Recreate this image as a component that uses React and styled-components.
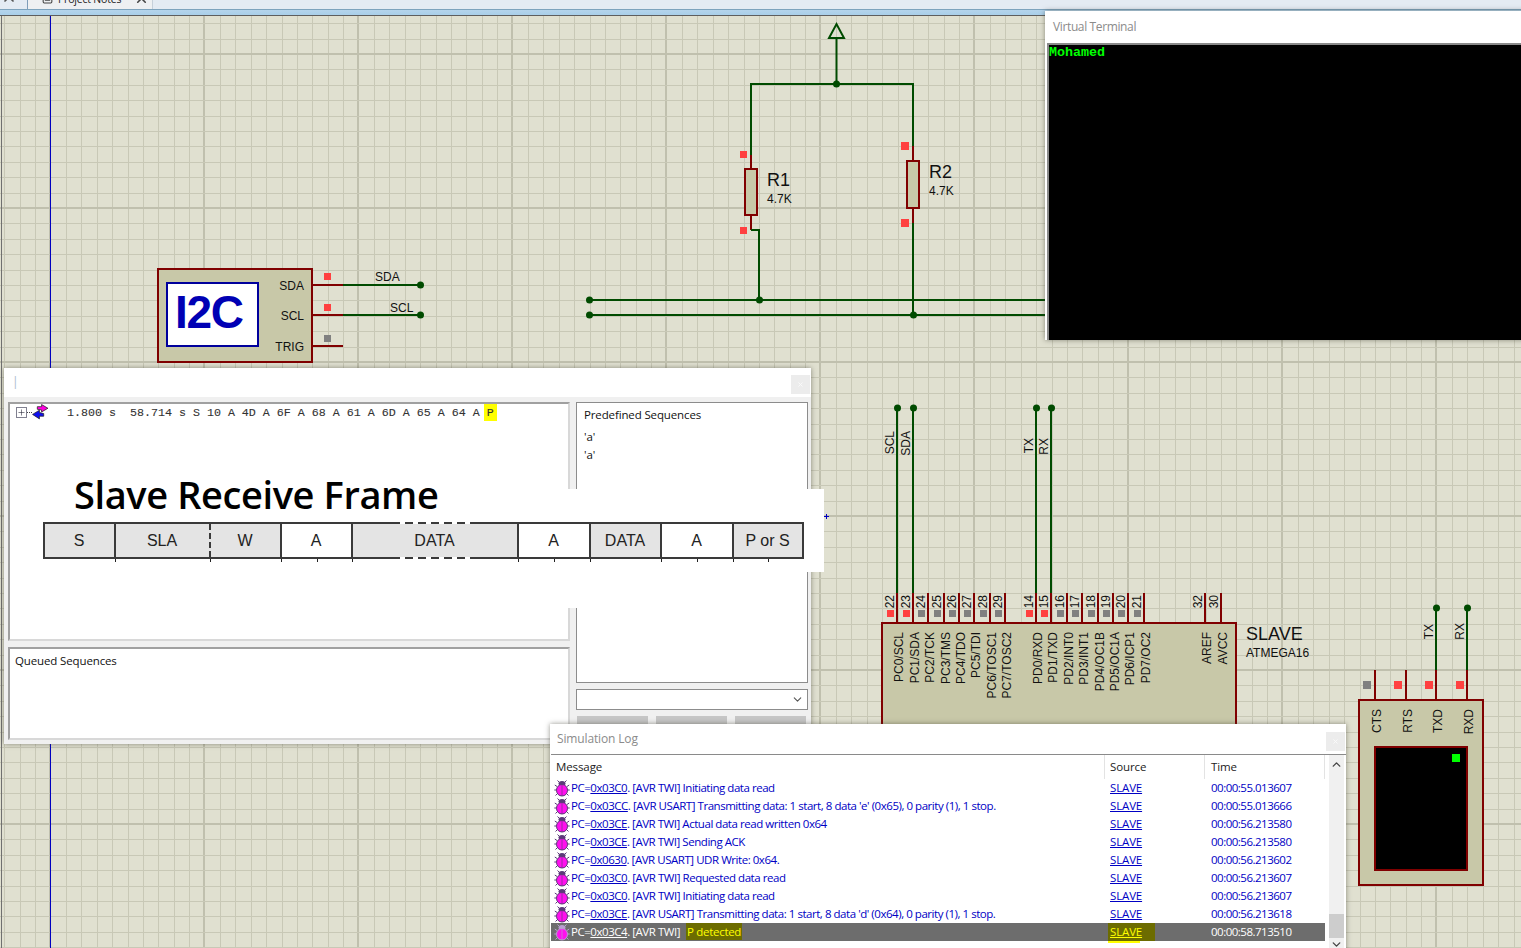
import React from "react";
import styled, { createGlobalStyle } from "styled-components";
import { X, FileText, ChevronDown, ChevronUp, Plus } from "lucide-react";

const Global = createGlobalStyle`
  html, body { margin: 0; padding: 0; background: #e0e0d0; }
  body { font-family: "Open Sans", "Liberation Sans", sans-serif; overflow: hidden; }
`;

const Desk = styled.div`
  position: relative; width: 1521px; height: 948px; overflow: hidden;
  display: flex; flex-direction: column;
`;
const TabBar = styled.div`
  height: 9px; flex: none; background: #e4ebf3; display: flex; overflow: hidden; align-items: flex-start;
`;
const TabClose = styled.span`
  display: flex; margin: -11px 0 0 1px; width: 16px; height: 16px; color: #555;
`;
const Tab = styled.div`
  margin: -11px 0 0 10px; width: 126px; height: 20px; box-sizing: border-box;
  background: #eef0f2; border-left: 1px solid #7f9db9; border-right: 1px solid #c6d0da;
  display: flex; align-items: flex-start; padding: 2px 0 0 13px; gap: 4px;
  font-size: 10.5px; letter-spacing: -.2px; line-height: 16px; color: #222; white-space: nowrap;
  svg { flex: none; color: #444; }
`;
const TabX = styled.span`
  display: flex; margin-left: 9px; color: #666;
`;
const Strip = styled.div`
  height: 6px; flex: none; background: linear-gradient(#b4d4ec, #a9cfe9); border-top: 1px solid #7da3bd; box-sizing: border-box;
`;
const Canvas = styled.div`
  flex: 1; min-height: 0; border-top: 1px solid #5e5e5e;
  svg { display: block; }
`;

const Win = styled.div`
  position: absolute; left: ${p => p.$x}px; top: ${p => p.$y}px; width: ${p => p.$w}px; height: ${p => p.$h}px;
  background: ${p => p.$bg || "#fff"}; box-sizing: border-box;
  box-shadow: 0 0 5px rgba(60, 60, 50, .55);
  display: flex; flex-direction: column;
`;
const TitleBar = styled.div`
  flex: none; height: ${p => p.$h}px; box-sizing: border-box; padding: 0 1px 2px ${p => p.$pad}px;
  background: #fff; display: flex; align-items: center; justify-content: space-between;
  font-size: 12px; color: ${p => p.$color || "#8b8b8b"}; letter-spacing: ${p => p.$ls}px;
`;
const CloseBtn = styled.span`
  width: 19px; height: 19px; margin-top: 6px; background: #ececec; color: #fafafa; display: flex; align-items: center; justify-content: center;
`;
const Terminal = styled.div`
  flex: 1; background: #000; margin-left: 2px; border-top: 2px solid #8a8a8a; border-left: 2px solid #8a8a8a;
  color: #00ff00; font: bold 13.33px/14px "Liberation Mono", monospace; padding: 1px 0 0 0;
`;

const Body = styled.div`
  flex: 1; min-height: 0; background: #f0f0f0; display: grid; grid-template-columns: 562px 232px; column-gap: 6px;
  padding: 5px 3px 4px 4px;
`;
const Col = styled.div`
  display: flex; flex-direction: column; min-height: 0; gap: ${p => p.$gap}px;
`;
const Sunken = styled.div`
  background: #fff; box-sizing: border-box; flex: ${p => p.$flex || "none"}; height: ${p => p.$h ? p.$h + "px" : "auto"};
  border: 2px solid #a0a0a0; border-right-color: #d8d8d8; border-bottom-color: #d8d8d8;
`;
const Framed = styled.div`
  background: #fff; box-sizing: border-box; flex: 1; border: 1px solid #8c8c8c; padding: 3px 7px;
  font-size: 11.5px; line-height: 18px; color: #111; letter-spacing: -.13px;
`;
const PaneTitle = styled.div`
  font-size: 11.5px; line-height: 18px; color: #111; letter-spacing: -.13px; padding: ${p => p.$pad};
`;
const SeqItem = styled.div` margin-top: ${p => p.$mt}px; `;
const TraceRow = styled.div`
  display: flex; align-items: center; height: 17px; padding-left: 6px;
  font: 11.67px/17px "Liberation Mono", monospace; color: #333; white-space: pre; -webkit-text-stroke: .1px #333;
`;
const Expand = styled.span`
  width: 9px; height: 9px; border: 1px solid #808090; display: flex; align-items: center; justify-content: center; color: #223; flex: none;
`;
const Dots = styled.span`
  width: 5px; border-top: 1px dotted #444; flex: none;
`;
const TraceText = styled.span` margin-left: 18px; padding-top: 1px; `;
const Hi = styled.span` background: #ffff00; display: inline-block; height: 17px; padding: 0 3px; margin: -1px -3px 0; vertical-align: top; line-height: 18px; `;
const Select = styled.div`
  flex: none; height: 21px; box-sizing: border-box; background: #fff; border: 1px solid #8c8c8c; display: flex; align-items: center; justify-content: flex-end; padding-right: 3px; color: #555;
`;
const BtnRow = styled.div` display: flex; gap: 8px; padding-left: 1px; `;
const GrayBtn = styled.div` width: 71px; height: 24px; background: #c6c6c6; `;

const FrameArt = styled.div`
  position: absolute; left: 40px; top: 489px; width: 784px; height: 83px; background: #fff;
  &::after { content: ""; position: absolute; left: 0; top: 83px; width: 538px; height: 36px; background: #fff; }
`;
const FrameTitle = styled.div`
  position: absolute; left: 34px; top: -20px; font: 600 38px/50px "Open Sans", sans-serif; color: #000; letter-spacing: -.4px; white-space: nowrap; z-index: 1;
`;
const FrameBack = styled.div`
  position: absolute; left: 30px; top: -29px; width: 420px; height: 29px; background: #fff;
`;
const FrameTable = styled.div`
  position: absolute; z-index: 1; left: 3px; top: 33px; width: 761px; height: 37px; box-sizing: border-box;
  display: flex; border: 2px solid #3a3a3a;
`;
const Cell = styled.div`
  position: relative; width: ${p => p.$w}px; flex: none; box-sizing: border-box; padding-right: 1px;
  background: ${p => (p.$white ? "#fff" : "#e4e4e4")}; font: 16px/34px "Liberation Sans", sans-serif; color: #222; text-align: center;
  border-right: ${p => (p.$last ? "0" : p.$dashed ? "2px dashed #3a3a3a" : "2px solid #3a3a3a")};
  &::after { content: ""; position: absolute; right: -2px; bottom: -5px; width: 1px; height: 3px; background: ${p => (p.$noEnd ? "transparent" : "#222")}; }
  &::before { content: ""; position: absolute; left: 50%; bottom: -5px; width: 1px; height: 3px; background: ${p => (p.$mid ? "#222" : "transparent")}; }
`;
const DashGap = styled.span`
  position: absolute; left: 47px; width: 71px; height: 2px; ${p => (p.$top ? "top: -2px;" : "bottom: -2px;")}
  background: repeating-linear-gradient(90deg, #fff 0 5px, transparent 5px 13px);
`;

const LogGrid = styled.div`
  flex: 1; min-height: 0; display: flex; border-top: 1px solid #8a8a8a; margin-left: 1px; background: #fff;
`;
const LogList = styled.div` width: 774px; flex: none; `;
const ScrollBar = styled.div`
  margin-left: 4px; width: 15px; background: #f0f0f0; position: relative; display: flex; flex-direction: column; align-items: center; color: #444; padding-top: 3px; box-sizing: border-box;
`;
const Thumb = styled.div` width: 15px; height: 24px; background: #cdcdcd; margin-top: 143px; `;
const DownArrow = styled.span` display: flex; margin-top: 0; `;
const LogHeadRow = styled.div`
  display: grid; grid-template-columns: 554px 100px 120px; height: 24px; font-size: 11.5px; line-height: 23px; color: #222; letter-spacing: -.1px;
`;
const HeadCell = styled.div`
  padding-left: ${p => p.$pad}px; border-right: 1px solid #e3e3e3;
`;
const LogRow = styled.div`
  display: grid; grid-template-columns: 554px 100px 120px; height: 18px; align-items: center;
  background: ${p => (p.$sel ? "#6d6d6d" : "transparent")};
  color: ${p => (p.$sel ? "#fff" : "#0000c4")};
  font-size: 11.5px; line-height: 18px; letter-spacing: -.46px; white-space: nowrap;
  a { color: inherit; text-decoration: underline; }
`;
const MsgCell = styled.div` display: flex; align-items: center; padding-left: 3px; gap: 1px; `;
const Mark = styled.span`
  background: #6c6c00; color: #ffff00; padding: 1px; margin-left: 6px; letter-spacing: -.3px;
`;
const SrcCell = styled.div` padding-left: 5px; position: relative; `;
const SrcMark = styled.span`
  position: absolute; left: 3px; top: 0; width: 47px; height: 18px; background: #6c6c00;
  &::after { content: ""; position: absolute; left: 0; top: 18px; width: 32px; height: 2px; background: #ffff00; }
`;
const SrcLink = styled.a`
  position: relative; letter-spacing: -.15px; color: ${p => (p.$hi ? "#ffff00 !important" : "inherit")};
`;
const TimeCell = styled.div` padding-left: 6px; letter-spacing: -.5px; `;

const W = "#004b00", R = "#800000", F = "#c8c8a8", RED = "#ff4040", GR = "#808080";

const xs = Array.from({ length: 100 }, (_, i) => i - 4);
const ys = Array.from({ length: 62 }, (_, i) => i - 3);

const Wire = ({ d, c = W, w = 2 }) => <path d={d} stroke={c} strokeWidth={w} fill="none" />;
const Dot = ({ x, y }) => <circle cx={x} cy={y} r="3.5" fill={W} />;
const Sq = ({ x, y, s = 7, c = RED }) => <rect x={x} y={y} width={s} height={s} fill={c} />;
const T = ({ x, y, s = 12, children, anchor = "start", weight, fill = "#111", ls }) => (
  <text x={x} y={y} fontSize={s} textAnchor={anchor} fontWeight={weight} fill={fill} letterSpacing={ls} fontFamily='"Liberation Sans", sans-serif'>{children}</text>
);
const V = ({ x, y, s = 12, children, anchor = "end" }) => (
  <text transform={`translate(${x} ${y}) rotate(-90)`} fontSize={s} textAnchor={anchor} fill="#111" fontFamily='"Liberation Sans", sans-serif'>{children}</text>
);

const pins = [
  [897, "22", "PC0/SCL", 1], [913, "23", "PC1/SDA", 1], [928, "24", "PC2/TCK"], [944, "25", "PC3/TMS"],
  [959, "26", "PC4/TDO"], [974, "27", "PC5/TDI"], [990, "28", "PC6/TOSC1"], [1005, "29", "PC7/TOSC2"],
  [1036, "14", "PD0/RXD", 1], [1051, "15", "PD1/TXD", 1], [1067, "16", "PD2/INT0"], [1082, "17", "PD3/INT1"],
  [1098, "18", "PD4/OC1B"], [1113, "19", "PD5/OC1A"], [1128, "20", "PD6/ICP1"], [1144, "21", "PD7/OC2"],
];

const Schematic = () => (
  <svg width="1521" height="932" viewBox="0 16 1521 932">
    <rect x="0" y="16" width="1521" height="932" fill="#e0e0d0" />
    <g shapeRendering="crispEdges">
      {xs.map(k => {
        const major = k % 10 === 0;
        const x = Math.round(50.6 + 15.4 * k);
        return <rect key={k} x={major ? x - 2 : x} y="16" width={major ? 2 : 1} height="932" fill={major ? "#c0c0ae" : "#c8c8b6"} />;
      })}
      {ys.map(k => {
        const major = k % 10 === 0;
        const y = Math.round(54 + 15.4 * k);
        return <rect key={k} x="0" y={major ? y - 1 : y} width="1521" height={major ? 2 : 1} fill={major ? "#c0c0ae" : "#c8c8b6"} />;
      })}
      <rect x="1" y="16" width="1" height="932" fill="#707070" />
      <rect x="50" y="16" width="1" height="932" fill="#0000c0" />
    </g>

    <Wire d="M836.5 84V38M829 38h15L836.5 24z" />
    <Wire d="M751 155V84H913V146" />
    <Wire d="M751 155v14M751 215v15M913 146v15M913 208v15" c={R} />
    <Wire d="M751 230h8V300M913 223V315" />
    <Wire d="M589 300H1046M589 315H1046" />
    <rect x="745" y="169" width="12" height="46" fill={F} stroke={R} strokeWidth="2" />
    <rect x="907" y="161" width="12" height="47" fill={F} stroke={R} strokeWidth="2" />
    <Dot x="836.5" y="84" /><Dot x="589.5" y="300" /><Dot x="589.5" y="315" /><Dot x="759.5" y="300" /><Dot x="913.5" y="315" />
    <Sq x="740" y="151" /><Sq x="740" y="227" /><Sq x="901" y="142" s="8" /><Sq x="901" y="219" s="8" />
    <T x="767" y="186" s={18}>R1</T><T x="767" y="203">4.7K</T>
    <T x="929" y="178" s={18}>R2</T><T x="929" y="195">4.7K</T>

    <rect x="158" y="269" width="154" height="93" fill={F} stroke={R} strokeWidth="2" />
    <rect x="167" y="283" width="91" height="63" fill="#fff" stroke="#00009c" strokeWidth="2" />
    <T x="175" y="328" s={46} weight="bold" fill="#0000b4" ls={-1.3}>I2C</T>
    <T x="304" y="290" anchor="end">SDA</T><T x="304" y="320" anchor="end">SCL</T><T x="304" y="351" anchor="end">TRIG</T>
    <Wire d="M312 285h31M312 315h31M312 346h31" c={R} />
    <Wire d="M343 285h77M343 315h77" />
    <Dot x="420.5" y="285" /><Dot x="420.5" y="315" />
    <Sq x="324" y="273" /><Sq x="324" y="304" /><Sq x="324" y="335" c={GR} />
    <T x="375" y="281">SDA</T><T x="390" y="312">SCL</T>

    <path d="M824 516.5h5M826.500 514v5" stroke="#0000c0" fill="none" />

    <rect x="882" y="623" width="354" height="140" fill={F} stroke={R} strokeWidth="2" />
    {pins.map(([x, n, name, on]) => (
      <g key={n}>
        <Wire d={`M${x} 593V623`} c={R} />
        <V x={x - 3} y="595">{n}</V>
        <Sq x={x - 10} y="610" c={on ? RED : GR} />
        <V x={x + 6} y="632">{name}</V>
      </g>
    ))}
    <Wire d="M1205 593V623M1221 593V623" c={R} />
    <V x="1202" y="595">32</V><V x="1218" y="595">30</V>
    <V x="1211" y="632">AREF</V><V x="1227" y="632">AVCC</V>
    <T x="1246" y="640" s={18}>SLAVE</T><T x="1246" y="657">ATMEGA16</T>
    <Wire d="M897 408V593M913 408V593M1036 408V593M1051 408V593" />
    <Dot x="897.5" y="408" /><Dot x="913.5" y="408" /><Dot x="1036.5" y="408" /><Dot x="1051.5" y="408" />
    <V x="894" y="431">SCL</V><V x="910" y="431">SDA</V><V x="1033" y="438">TX</V><V x="1048" y="438">RX</V>

    <rect x="1359" y="700" width="124" height="185" fill={F} stroke={R} strokeWidth="2" />
    <rect x="1375" y="747" width="92" height="123" fill="#000" stroke={R} strokeWidth="2" />
    <rect x="1452" y="754" width="8" height="8" fill="#00ff00" />
    <Wire d="M1375 670v30M1406 670v30M1436 670v30M1467 670v30" c={R} />
    <Wire d="M1436 608v62M1467 608v62" />
    <Dot x="1436.5" y="608" /><Dot x="1467.5" y="608" />
    <Sq x="1363" y="681" s={8} c={GR} /><Sq x="1394" y="681" s={8} /><Sq x="1425" y="681" s={8} /><Sq x="1456" y="681" s={8} />
    <V x="1433" y="624">TX</V><V x="1464" y="623">RX</V>
    <V x="1381" y="709">CTS</V><V x="1412" y="709">RTS</V><V x="1442" y="709">TXD</V><V x="1473" y="709">RXD</V>
  </svg>
);

const PairArrows = () => (
  <svg width="17" height="17" viewBox="0 0 16 16" style={{ flex: "none" }}>
    <path d="M5 5V2.500h4V0.500l6 3.500-6 3.500V5.500z" fill="#ff00e0" stroke="#222" strokeWidth=".7" />
    <path d="M11 9v2.500H7v2.500l-6.500-4.200L7 5.800v2.200z" fill="#1010f0" stroke="#222" strokeWidth=".7" />
  </svg>
);

const Bug = ({ leg = "#5a3a78" }) => (
  <svg width="16" height="17" viewBox="0 0 16 17" style={{ flex: "none" }}>
    <path d="M5 2 3.500.5M11 2l1.500-1.500M3 6.500 .8 5M13 6.500 15.200 5M2.500 10H.3M13.500 10h2.200M3.500 13.500 1.500 15.500M12.500 13.500l2 2" stroke={leg} strokeWidth="1" fill="none" />
    <ellipse cx="8" cy="3.500" rx="3.500" ry="2.500" fill={leg} />
    <path d="M8 4.500c-3.200 0-5.500 2.500-5.500 5.700 0 3.500 2.500 5.800 5.500 5.800s5.500-2.300 5.500-5.800C13.500 7 11.200 4.500 8 4.500z" fill="#ff10ee" stroke={leg} />
    <path d="M8 5v11" stroke={leg} strokeWidth=".6" />
  </svg>
);

const logs = [
  ["0x03C0", " [AVR TWI] Initiating data read", "00:00:55.013607"],
  ["0x03CC", " [AVR USART] Transmitting data: 1 start, 8 data 'e' (0x65), 0 parity (1), 1 stop.", "00:00:55.013666"],
  ["0x03CE", " [AVR TWI] Actual data read written 0x64", "00:00:56.213580"],
  ["0x03CE", " [AVR TWI] Sending ACK", "00:00:56.213580"],
  ["0x0630", " [AVR USART] UDR Write: 0x64.", "00:00:56.213602"],
  ["0x03C0", " [AVR TWI] Requested data read", "00:00:56.213607"],
  ["0x03C0", " [AVR TWI] Initiating data read", "00:00:56.213607"],
  ["0x03CE", " [AVR USART] Transmitting data: 1 start, 8 data 'd' (0x64), 0 parity (1), 1 stop.", "00:00:56.213618"],
];

const cells = [
  { t: "S", w: 71 }, { t: "SLA", w: 95, dashed: true }, { t: "W", w: 71 },
  { t: "A", w: 71, white: true, mid: true }, { t: "DATA", w: 166, gaps: true }, { t: "A", w: 72, white: true, mid: true },
  { t: "DATA", w: 71 }, { t: "A", w: 72, white: true, mid: true }, { t: "P or S", w: 68, last: true, mid: true, noEnd: true },
];

export default function App() {
  return (
    <Desk>
      <Global />
      <TabBar>
        <TabClose><X size={16} strokeWidth={2.5} /></TabClose>
        <Tab>
          <FileText size={13} />
          <span>Project Notes</span>
          <TabX><X size={15} strokeWidth={2.5} /></TabX>
        </Tab>
      </TabBar>
      <Strip />
      <Canvas><Schematic /></Canvas>

      <Win $x={1045} $y={11} $w={480} $h={329}>
        <TitleBar $h={32} $pad={8} $ls={-.37}>Virtual Terminal</TitleBar>
        <Terminal>Mohamed</Terminal>
      </Win>

      <Win $x={4} $y={368} $w={807} $h={376}>
        <TitleBar $h={29} $pad={8} $ls={0} $color="#a9bccb">
          <span>|</span>
          <CloseBtn><X size={7} strokeWidth={3} /></CloseBtn>
        </TitleBar>
        <Body>
          <Col $gap={6}>
            <Sunken $flex="1">
              <TraceRow>
                <Expand><Plus size={9} strokeWidth={1.5} /></Expand>
                <Dots />
                <PairArrows />
                <TraceText>1.800 s  58.714 s S 10 A 4D A 6F A 68 A 61 A 6D A 65 A 64 A <Hi>P</Hi></TraceText>
              </TraceRow>
            </Sunken>
            <Sunken $h={93}><PaneTitle $pad="3px 5px">Queued Sequences</PaneTitle></Sunken>
          </Col>
          <Col $gap={6}>
            <Framed>
              <div>Predefined Sequences</div>
              <SeqItem $mt={4}>'a'</SeqItem>
              <SeqItem $mt={0}>'a'</SeqItem>
            </Framed>
            <Select><ChevronDown size={13} /></Select>
            <BtnRow><GrayBtn /><GrayBtn /><GrayBtn /></BtnRow>
          </Col>
        </Body>
      </Win>

      <FrameArt>
        <FrameBack />
        <FrameTitle>Slave Receive Frame</FrameTitle>
        <FrameTable>
          {cells.map((c, i) => (
            <Cell key={i} $w={c.w} $white={c.white} $dashed={c.dashed} $last={c.last} $mid={c.mid} $noEnd={c.noEnd}>
              {c.t}
              {c.gaps && <DashGap $top />}
              {c.gaps && <DashGap />}
            </Cell>
          ))}
        </FrameTable>
      </FrameArt>

      <Win $x={550} $y={724} $w={796} $h={230}>
        <TitleBar $h={30} $pad={7} $ls={-.14}>
          <span>Simulation Log</span>
          <CloseBtn><X size={7} strokeWidth={3} /></CloseBtn>
        </TitleBar>
        <LogGrid>
          <LogList>
            <LogHeadRow>
              <HeadCell $pad={5}>Message</HeadCell>
              <HeadCell $pad={5}>Source</HeadCell>
              <HeadCell $pad={6}>Time</HeadCell>
            </LogHeadRow>
            {logs.map(([pc, msg, time], i) => (
              <LogRow key={i}>
                <MsgCell><Bug /><span>PC=<a>{pc}</a>.{msg}</span></MsgCell>
                <SrcCell><SrcLink as="a">SLAVE</SrcLink></SrcCell>
                <TimeCell>{time}</TimeCell>
              </LogRow>
            ))}
            <LogRow $sel>
              <MsgCell><Bug leg="#b8a0d0" /><span>PC=<a>0x03C4</a>. [AVR TWI]<Mark>P detected</Mark></span></MsgCell>
              <SrcCell><SrcMark /><SrcLink as="a" $hi>SLAVE</SrcLink></SrcCell>
              <TimeCell>00:00:58.713510</TimeCell>
            </LogRow>
          </LogList>
          <ScrollBar>
            <ChevronUp size={13} strokeWidth={2.5} />
            <Thumb />
            <DownArrow><ChevronDown size={13} strokeWidth={2.5} /></DownArrow>
          </ScrollBar>
        </LogGrid>
      </Win>
    </Desk>
  );
}
